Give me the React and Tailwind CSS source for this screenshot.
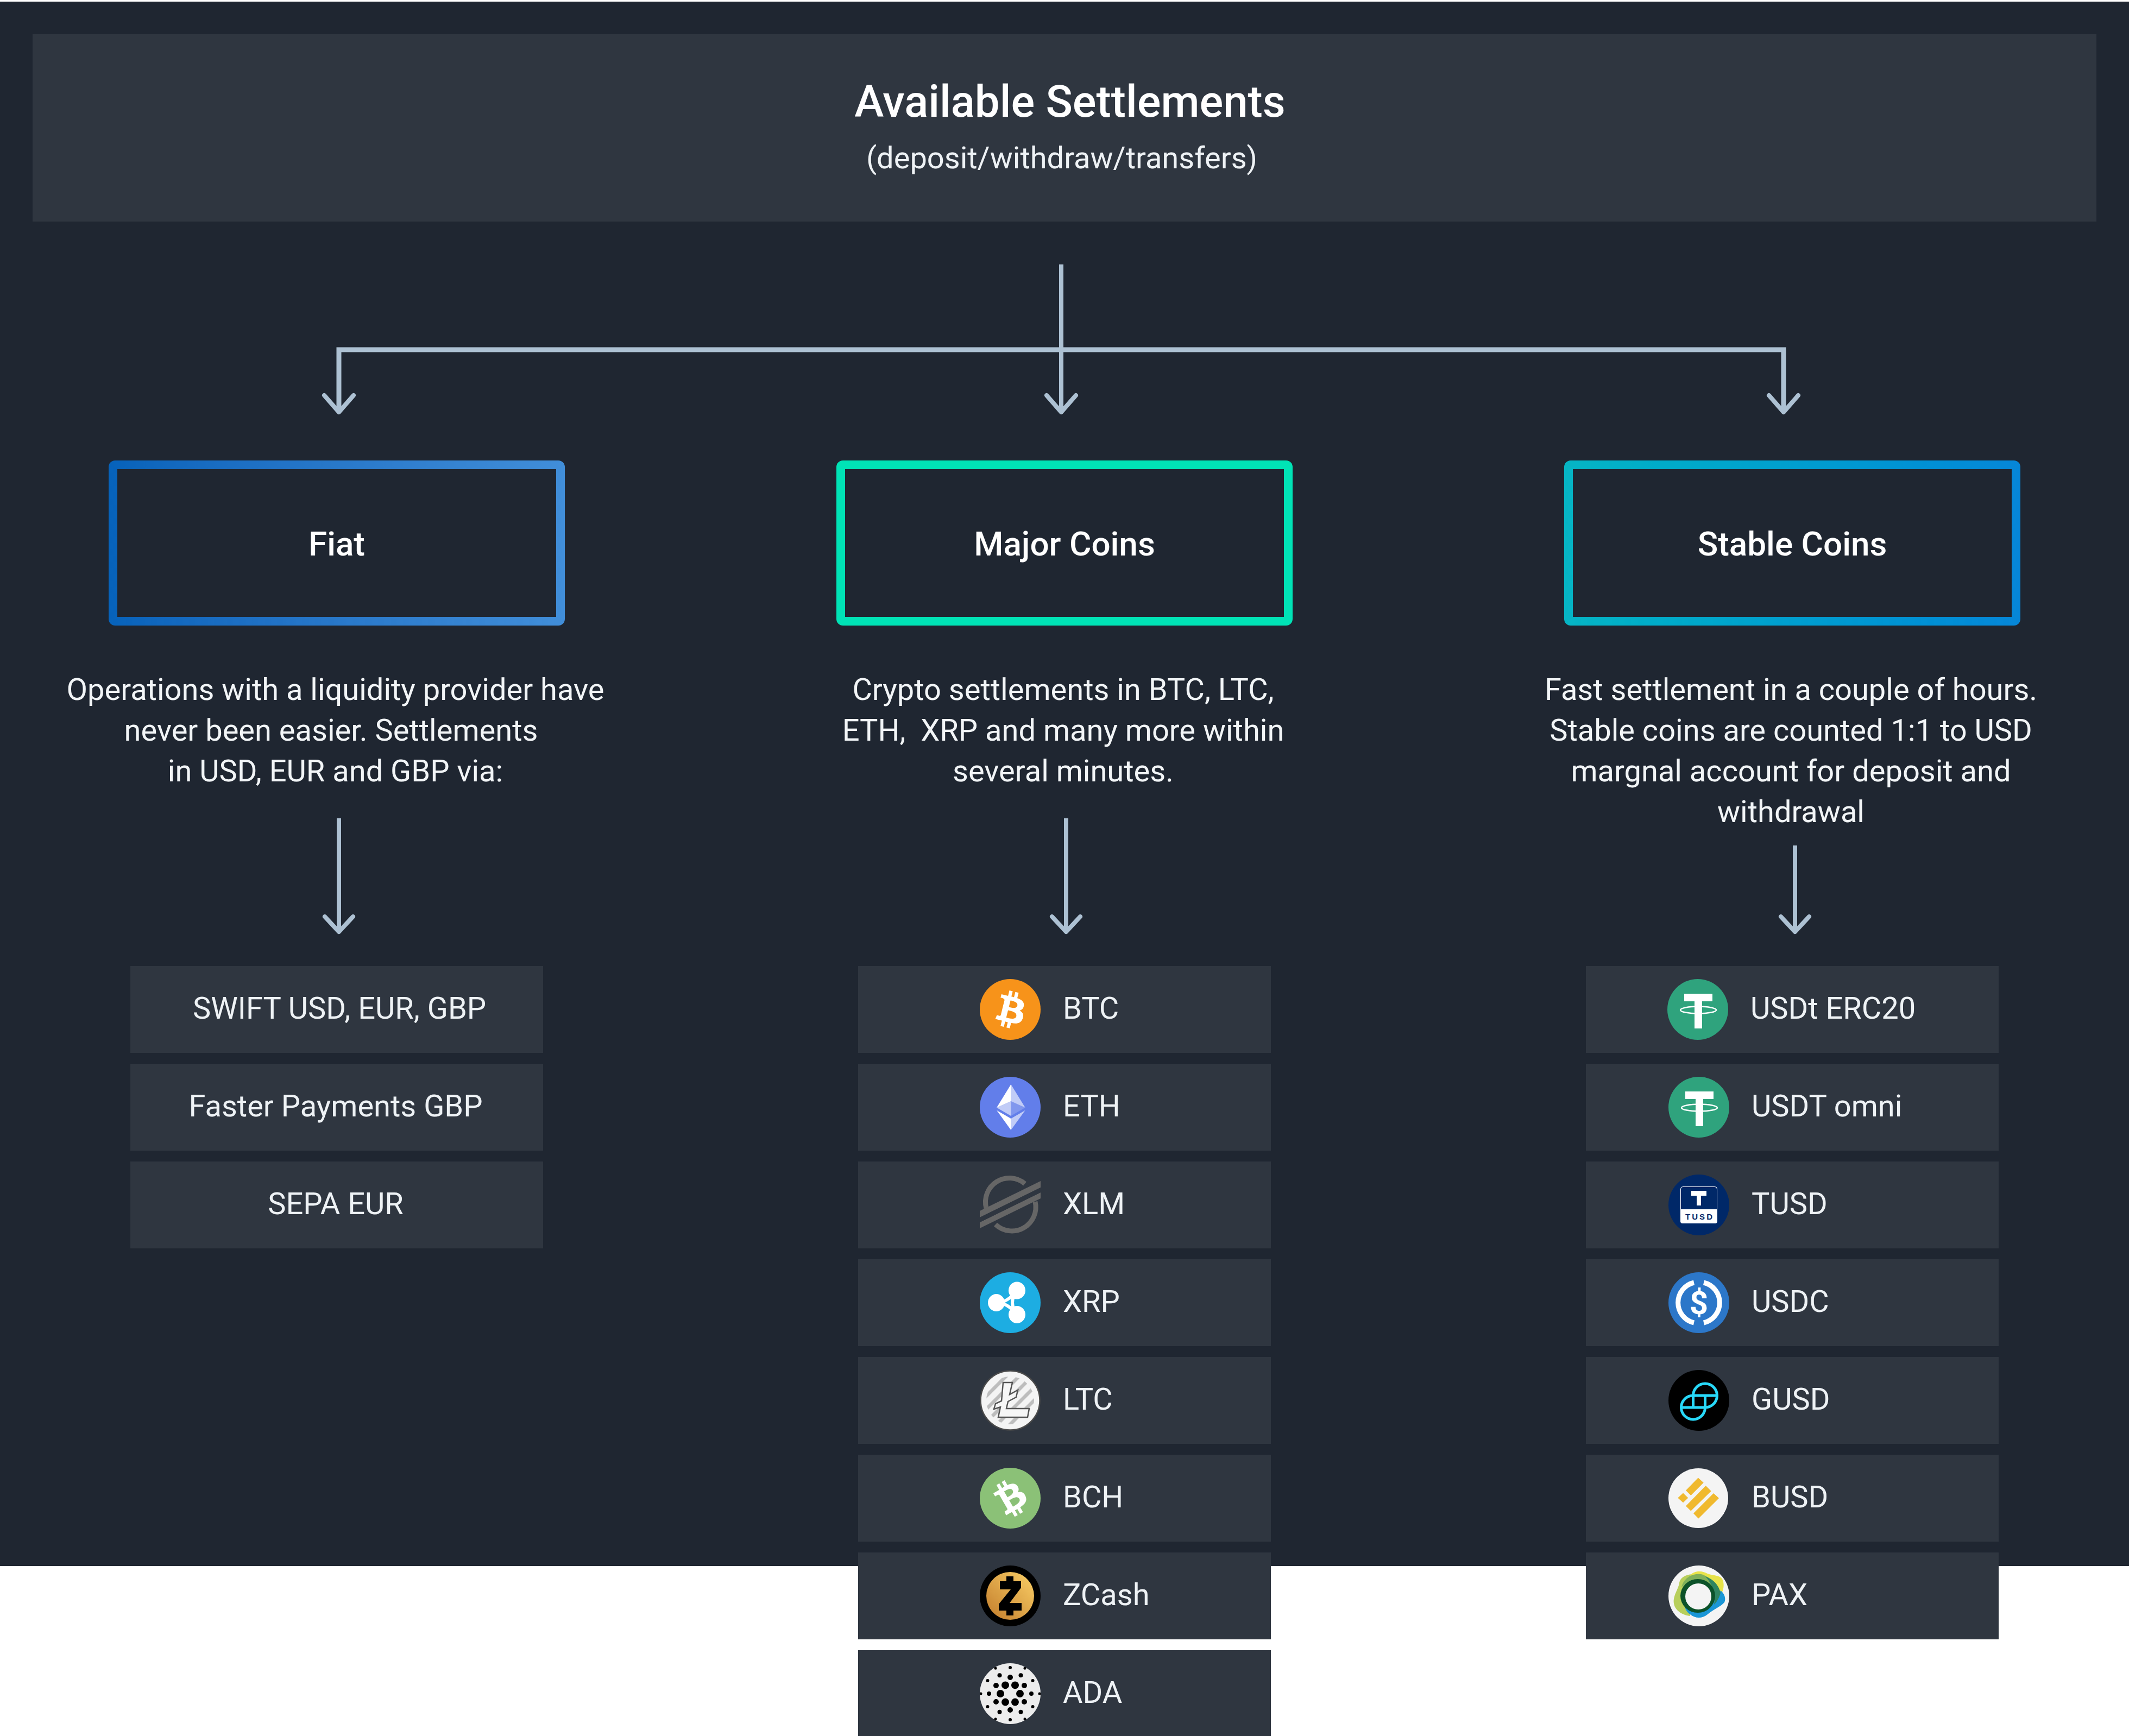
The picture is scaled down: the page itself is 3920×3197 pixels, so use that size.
const btcPath = "M23.189 14.02c.314-2.096-1.283-3.223-3.465-3.975l.708-2.84-1.728-.43-.69 2.765c-.454-.114-.92-.22-1.385-.326l.695-2.783L15.596 6l-.708 2.839c-.376-.086-.746-.17-1.104-.26l.002-.009-2.384-.595-.46 1.846s1.283.294 1.256.312c.7.175.826.638.805 1.006l-.806 3.235c.048.012.11.03.18.057l-.183-.045-1.13 4.532c-.086.212-.303.531-.793.41.018.025-1.256-.313-1.256-.313l-.858 1.978 2.25.561c.418.105.828.215 1.231.318l-.715 2.872 1.727.43.708-2.84c.472.127.93.245 1.378.357l-.706 2.828 1.728.43.715-2.866c2.948.558 5.164.333 6.097-2.333.752-2.146-.037-3.385-1.588-4.192 1.13-.26 1.98-1.003 2.207-2.538zm-3.95 5.538c-.533 2.147-4.148.986-5.32.695l.95-3.805c1.172.293 4.929.872 4.37 3.11zm.535-5.569c-.487 1.953-3.495.96-4.47.717l.86-3.45c.975.243 4.118.696 3.61 2.733z";

function Svg32({ children }) {
  return <svg viewBox="0 0 32 32" className="w-[112px] h-[112px] shrink-0">{children}</svg>;
}

function Svg112({ children }) {
  return <svg viewBox="0 0 112 112" className="w-[112px] h-[112px] shrink-0">{children}</svg>;
}

const BtcIcon = () => (
  <Svg32>
    <circle cx="16" cy="16" r="16" fill="#f7931a" />
    <path fill="#fff" d={btcPath} />
  </Svg32>
);

const EthIcon = () => (
  <Svg32>
    <circle cx="16" cy="16" r="16" fill="#627eea" />
    <g fill="#fff" transform="translate(-0.1 0)">
      <path fillOpacity=".602" d="M16.498 4v8.87l7.497 3.35z" />
      <path d="M16.498 4L9 16.22l7.498-3.35z" />
      <path fillOpacity=".602" d="M16.498 21.968v6.027L24 17.616z" />
      <path d="M16.498 27.995v-6.028L9 17.616z" />
      <path fillOpacity=".2" d="M16.498 20.573l7.497-4.353-7.497-3.348z" />
      <path fillOpacity=".602" d="M9 16.22l7.498 4.353v-7.701z" />
    </g>
  </Svg32>
);

const XlmIcon = () => (
  <Svg112>
    <g fill="none" stroke="#666" strokeWidth="9">
      <path d="M83 17A44 44 0 0 0 12 62" />
      <path d="M29 92A44 44 0 0 0 102 50" />
    </g>
    <g fill="#666">
      <path d="M0 67L112 12V24L0 79Z" />
      <path d="M0 88L112 33V44L0 99Z" />
    </g>
    <path d="M0 79L112 24V33L0 88Z" fill="#2f3640" />
  </Svg112>
);

const XrpIcon = () => (
  <Svg112>
    <circle cx="56" cy="56" r="56" fill="#1dade2" />
    <g fill="#fff">
      <ellipse cx="30.5" cy="56" rx="15.5" ry="16" />
      <ellipse cx="68.5" cy="33.5" rx="15.5" ry="16" />
      <ellipse cx="68.5" cy="78" rx="15.5" ry="16" />
    </g>
    <g fill="none" stroke="#fff" strokeWidth="6">
      <path d="M30.5 56Q50 57 68.5 33.5" />
      <path d="M30.5 56Q50 55 68.5 78" />
      <path d="M68.5 33.5Q51.5 56 68.5 78" />
    </g>
  </Svg112>
);

const LtcIcon = () => (
  <Svg112>
    <defs>
      <clipPath id="ltc-clip"><circle cx="56" cy="56" r="44" /></clipPath>
    </defs>
    <circle cx="56" cy="56" r="54.5" fill="#f4f4f4" stroke="#4a4a4a" strokeWidth="2.5" />
    <g clipPath="url(#ltc-clip)" stroke="#bdbdbd" strokeWidth="6.5">
      <path d="M0 60L60 0M8 76L76 8M20 88L88 20M36 96L96 36M52 104L104 52" />
    </g>
    <path fill="#f6f6f6" stroke="#555" strokeWidth="2.5" d="M43 23H60L55 45L70 37L67 50L52 58L49 71H91L88 87H34L38 68L26 72L29 62L40 57Z" />
  </Svg112>
);

const BchIcon = () => (
  <Svg32>
    <circle cx="16" cy="16" r="16" fill="#8bc177" />
    <path fill="#fff" d={btcPath} transform="rotate(-44 16 16)" />
  </Svg32>
);

const ZecIcon = () => (
  <Svg112>
    <defs>
      <linearGradient id="zec-grad" x1="0" y1="1" x2="1" y2="0">
        <stop offset="0" stopColor="#c27c2b" />
        <stop offset="1" stopColor="#fbd067" />
      </linearGradient>
    </defs>
    <circle cx="56" cy="56" r="56" fill="#000" />
    <circle cx="56" cy="56" r="44" fill="url(#zec-grad)" />
    <path fill="#000" d="M49 20H62V29H76V41L55 69H77V83H62V92H49V83H35V71L57 44H37V29H49Z" />
  </Svg112>
);

const AdaIcon = () => {
  // concentric rings of dots: [ring radius, dot radius, start angle]
  const rings = [
    [18, 7, 0],
    [30, 5, 30],
    [39, 4, 0],
    [48, 3, 30],
    [54, 2.5, 0],
  ];
  return (
    <Svg112>
      <circle cx="56" cy="56" r="56" fill="#ececec" />
      {rings.map(([radius, dot, start]) =>
        [0, 1, 2, 3, 4, 5].map((i) => {
          const a = ((start + i * 60) * Math.PI) / 180;
          return (
            <circle
              key={radius + "-" + i}
              cx={56 + radius * Math.cos(a)}
              cy={56 + radius * Math.sin(a)}
              r={dot}
              fill="#000"
            />
          );
        })
      )}
    </Svg112>
  );
};

const UsdtIcon = () => (
  <Svg112>
    <circle cx="56" cy="56" r="56" fill="#2fa37d" />
    <path fill="#fff" d="M31 27H83V41H64V91H50V41H31Z" />
    <ellipse cx="57" cy="57" rx="33" ry="6.5" fill="none" stroke="#fff" strokeWidth="2.5" />
  </Svg112>
);

const TusdIcon = () => (
  <Svg112>
    <circle cx="56" cy="56" r="56" fill="#002868" />
    <rect x="22.5" y="22.5" width="67" height="67" rx="4" fill="#002868" stroke="#fff" strokeWidth="1" />
    <path fill="#fff" d="M22 64H90V86A4 4 0 0 1 86 90H26A4 4 0 0 1 22 86Z" />
    <path fill="#fff" d="M42 30H70V39H60V57H52V39H42Z" />
    <text x="56" y="83" textAnchor="middle" fontFamily="'Liberation Sans', sans-serif" fontWeight="700" fontSize="15" textLength="50" fill="#002868">TUSD</text>
  </Svg112>
);

const UsdcIcon = () => (
  <Svg112>
    <circle cx="56" cy="56" r="56" fill="#2c77c9" />
    <g fill="none" stroke="#fff" strokeWidth="9">
      <path d="M47 19A38 38 0 0 0 47 93" />
      <path d="M65 19A38 38 0 0 1 65 93" />
    </g>
    <text x="56" y="77" textAnchor="middle" fontFamily="Roboto, sans-serif" fontWeight="700" fontSize="60" fill="#fff">$</text>
  </Svg112>
);

const GusdIcon = () => (
  <Svg112>
    <circle cx="56" cy="56" r="56" fill="#000" />
    <g fill="none" stroke="#28d9f9" strokeWidth="5">
      <path d="M45.5 69V47A22 22 0 0 1 89.5 47A22 22 0 0 1 67.5 69" />
      <path d="M67.5 47V69A22 22 0 0 1 23.5 69A22 22 0 0 1 45.5 47" />
      <path d="M45.5 47H89.5M23.5 69H67.5" />
    </g>
  </Svg112>
);

const BusdIcon = () => (
  <Svg112>
    <circle cx="55" cy="56" r="55" fill="#f4f4f4" />
    <g fill="#f0b92e">
      <path d="M54.7 18.6L64.7 27.5L41.3 51L32 41.7Z" />
      <path d="M68.7 33L78.7 42.9L41.3 79.6L32 70.4Z" />
      <path d="M83 47L93 56L55.3 93.6L46 84Z" />
      <path d="M27 46.4L36.3 55.4L27 64.3L17.3 55.4Z" />
    </g>
  </Svg112>
);

const PaxIcon = () => (
  <Svg112>
    <circle cx="56" cy="56" r="56" fill="#f4f4f4" />
    <path fill="#b8cf5c" d="M10 70C8 55 18 45 20 32C22 20 36 15 50 16C60 30 40 70 40 93C28 92 12 84 10 70Z" />
    <path fill="#e8e34a" d="M40 18C50 8 62 10 72 15C84 20 98 16 101 30C103 40 100 48 96 56C80 40 56 24 40 18Z" />
    <path fill="#1a96d6" d="M96 46C104 52 106 62 103 68C96 76 84 80 72 90C62 98 50 98 40 90C34 86 32 82 30 76C60 84 86 72 96 46Z" />
    <path fill="#7fb05a" d="M24 40C28 24 42 14 60 16C76 20 86 34 88 44C70 26 40 24 24 40Z" />
    <path fill="#2f8460" d="M68 20C84 26 92 36 96 50C94 58 90 66 84 72C88 50 80 34 68 20Z" />
    <ellipse cx="54" cy="56" rx="32" ry="31" fill="#0c5229" />
    <circle cx="55" cy="57" r="24" fill="#f4f4f4" />
  </Svg112>
);

function Arrow({ height, className }) {
  const end = height - 5;
  return (
    <svg width="72" height={height} className={className}>
      <g fill="none" stroke="#adc1d3" strokeWidth="8" strokeLinecap="round">
        <line x1="36" y1="0" x2="36" y2={end} strokeLinecap="butt" />
        <path d={`M10 ${end - 28}L36 ${end}L62 ${end - 28}`} strokeLinejoin="round" />
      </g>
    </svg>
  );
}

const columns = [
  {
    title: "Fiat",
    frame: "bg-linear-to-r from-[#0662ba] to-[#418ed9]",
    lines: ["Operations with a liquidity provider have", "never been easier. Settlements", "in USD, EUR and GBP via:"],
    descHeight: "h-[274px]",
    arrowHeight: 214,
    arrowShift: "ml-[8px]",
    rows: [
      { label: "SWIFT USD, EUR, GBP", pad: "pl-[10px]" },
      { label: "Faster Payments GBP", pad: "pr-[4px]" },
      { label: "SEPA EUR", pad: "pr-[4px]" },
    ],
  },
  {
    title: "Major Coins",
    frame: "bg-[#00e3b6]",
    lines: ["Crypto settlements in BTC, LTC,", "ETH,  XRP and many more within", "several minutes."],
    descHeight: "h-[274px]",
    arrowHeight: 214,
    arrowShift: "ml-[6px]",
    rows: [
      { label: "BTC", icon: BtcIcon, pad: "pl-[224px]" },
      { label: "ETH", icon: EthIcon, pad: "pl-[224px]" },
      { label: "XLM", icon: XlmIcon, pad: "pl-[224px]" },
      { label: "XRP", icon: XrpIcon, pad: "pl-[224px]" },
      { label: "LTC", icon: LtcIcon, pad: "pl-[224px]" },
      { label: "BCH", icon: BchIcon, pad: "pl-[224px]" },
      { label: "ZCash", icon: ZecIcon, pad: "pl-[224px]" },
      { label: "ADA", icon: AdaIcon, pad: "pl-[224px]" },
    ],
  },
  {
    title: "Stable Coins",
    frame: "bg-linear-to-r from-[#06b5c4] to-[#0686d8]",
    lines: ["Fast settlement in a couple of hours.", "Stable coins are counted 1:1 to USD", "margnal account for deposit and", "withdrawal"],
    descHeight: "h-[324px]",
    arrowHeight: 164,
    arrowShift: "ml-[10px]",
    rows: [
      { label: "USDt ERC20", icon: UsdtIcon, pad: "pl-[150px]" },
      { label: "USDT omni", icon: UsdtIcon, pad: "pl-[152px]" },
      { label: "TUSD", icon: TusdIcon, pad: "pl-[152px]" },
      { label: "USDC", icon: UsdcIcon, pad: "pl-[152px]" },
      { label: "GUSD", icon: GusdIcon, pad: "pl-[152px]" },
      { label: "BUSD", icon: BusdIcon, pad: "pl-[152px]" },
      { label: "PAX", icon: PaxIcon, pad: "pl-[152px]" },
    ],
  },
];

function Row({ row }) {
  const Icon = row.icon;
  if (!Icon) {
    return (
      <div className={`h-[160px] flex items-center justify-center bg-[#2f3640] ${row.pad}`}>
        <span className="text-[56px] leading-none text-[#eef2f5] pb-[4px]">{row.label}</span>
      </div>
    );
  }
  return (
    <div className={`h-[160px] flex items-center gap-[41px] bg-[#2f3640] ${row.pad}`}>
      <Icon />
      <span className="text-[56px] leading-none text-[#eef2f5] pb-[4px]">{row.label}</span>
    </div>
  );
}

function Column({ col }) {
  return (
    <div className="flex flex-col items-center">
      <div className={`w-[840px] h-[304px] p-[16px] rounded-[12px] ${col.frame}`}>
        <div className="h-full flex items-center justify-center bg-[#1f2631]">
          <span className="pt-[2px] text-[62px] font-medium text-white">{col.title}</span>
        </div>
      </div>
      <div className={`mt-[81px] pr-[5px] ${col.descHeight} text-center text-[56px] leading-[75px] text-[#f2f5f7] whitespace-pre`}>
        {col.lines.map((line) => (
          <div key={line} className={line.endsWith("Settlements") ? "pr-[16px]" : ""}>{line}</div>
        ))}
      </div>
      <Arrow height={col.arrowHeight} className={col.arrowShift} />
      <div className="mt-[58px] w-[760px] flex flex-col gap-[20px]">
        {col.rows.map((row) => (
          <Row key={row.label} row={row} />
        ))}
      </div>
    </div>
  );
}

export default function App() {
  return (
    <div className="w-[3920px] h-[3197px] overflow-hidden bg-white pt-[3px] font-['Roboto',sans-serif]">
      <div className="h-[2881px] bg-[#1f2631]">
        <div className="pt-[60px] px-[60px]">
          <div className="h-[345px] flex flex-col items-center bg-[#2f3640]">
            <h1 className="mt-[76px] pl-[20px] text-[81.6px] leading-[96px] font-medium text-white">Available Settlements</h1>
            <p className="mt-[20px] pr-[10px] text-[56px] leading-[72px] text-[#eef2f5]">(deposit/withdraw/transfers)</p>
          </div>
        </div>

        {/* connector from the header down to the three columns */}
        <svg viewBox="0 0 3920 283" className="block mt-[79px] w-[3920px] h-[283px]">
          <g fill="none" stroke="#adc1d3" strokeWidth="8">
            <path d="M1954 0V272" />
            <path d="M624 272V157H3284V272" strokeWidth="9" />
          </g>
          <g fill="none" stroke="#adc1d3" strokeWidth="8" strokeLinecap="round" strokeLinejoin="round">
            <path d="M597 241L624 272L651 241" />
            <path d="M1927 241L1954 272L1981 241" />
            <path d="M3257 241L3284 272L3311 241" />
          </g>
        </svg>

        <div className="mt-[78px] grid grid-cols-[1240px_1240px_1240px] gap-x-[100px]">
          {columns.map((col) => (
            <Column key={col.title} col={col} />
          ))}
        </div>
      </div>
    </div>
  );
}
